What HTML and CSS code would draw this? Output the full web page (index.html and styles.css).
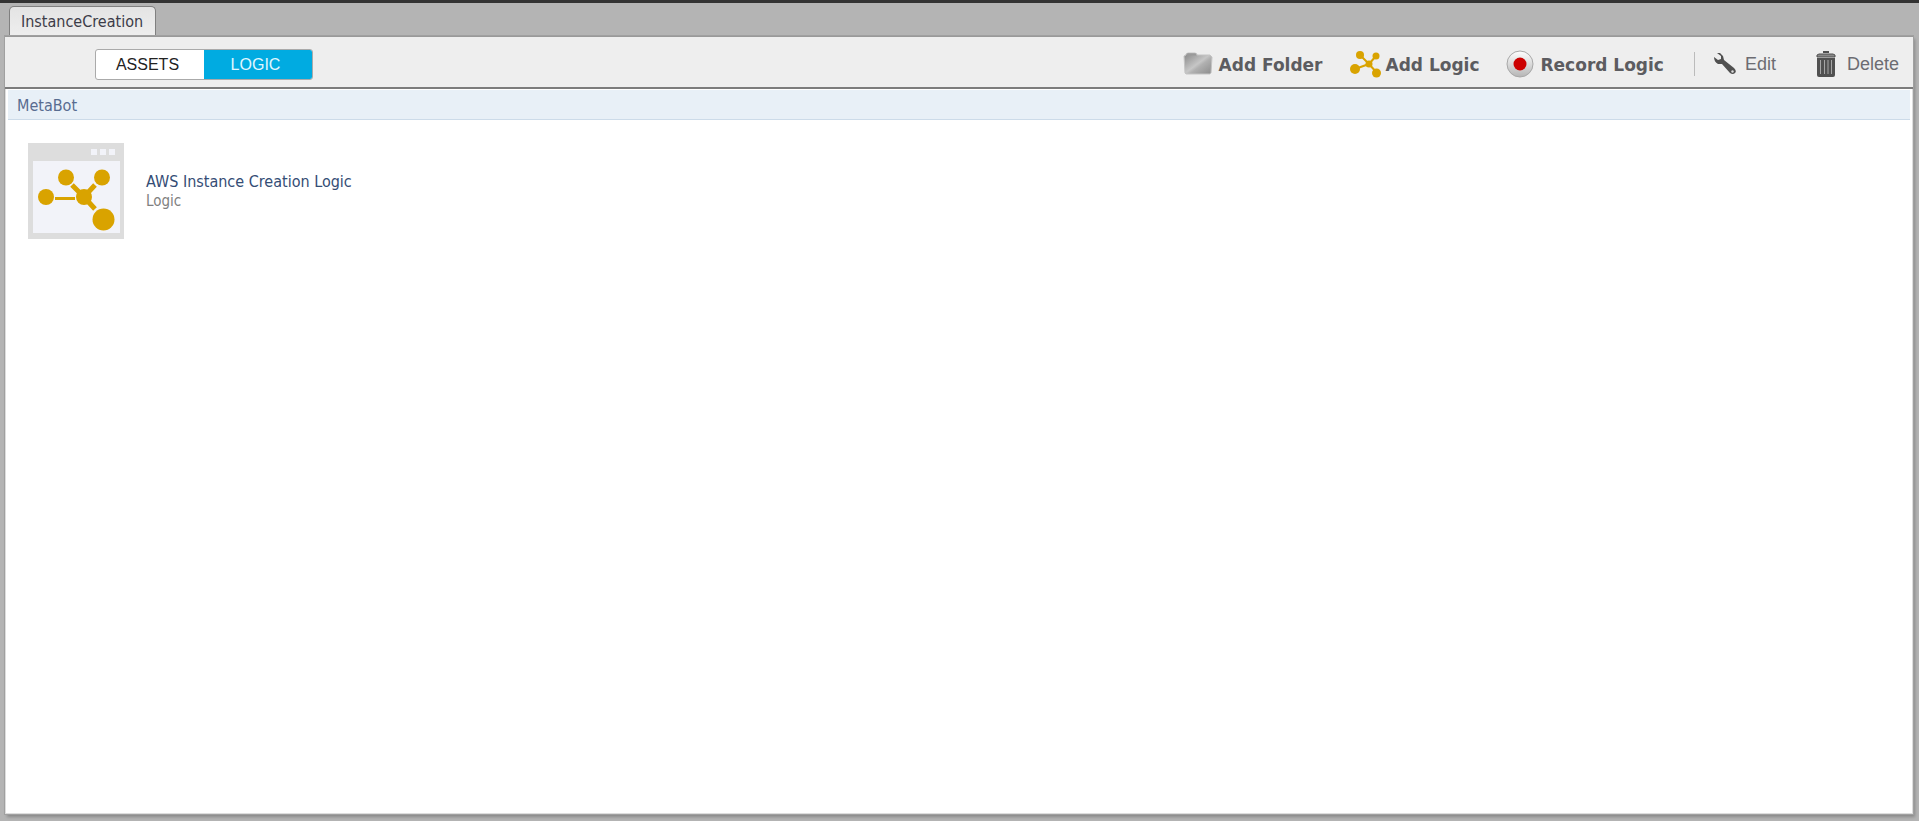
FILE: index.html
```html
<!DOCTYPE html>
<html lang="en">
<head>
<meta charset="utf-8">
<title>InstanceCreation</title>
<link rel="stylesheet" href="styles.css">
</head>
<body>
<div class="window">
  <nav class="tabs"><button class="tab" type="button">InstanceCreation</button></nav>
  <main class="panel">
    <header class="toolbar">
      <div class="switch">
        <button class="switch-item" type="button">ASSETS</button>
        <button class="switch-item active" type="button">LOGIC</button>
      </div>
      <div class="actions">
        <button class="action strong folder" type="button">
          <svg width="30" height="24" viewBox="0 0 30 24"><defs><linearGradient id="fg" x1="0" y1="0" x2="1" y2="1"><stop offset="0" stop-color="#858585"/><stop offset=".5" stop-color="#c6c6c6"/><stop offset=".6" stop-color="#b0b0b0"/><stop offset="1" stop-color="#8a8a8a"/></linearGradient></defs><path d="M3 3V2l2-1h7l2 1v1h13l2 2-1 16-1 1H3l-1-1L1 4z" fill="url(#fg)" stroke="#c4c4c4"/><path d="M4 2.500h9" stroke="#9a9a9a" stroke-width="2"/></svg>
          <span>Add Folder</span></button>
        <button class="action strong logic" type="button">
          <svg width="32" height="28" viewBox="0 0 32 28"><path d="M10 5l9 9 7-8M5 19l14-5 8 9" fill="none" stroke="#d9a300" stroke-width="2"/><g fill="#d9a300"><circle cx="10" cy="5" r="4"/><circle cx="26" cy="6" r="3.500"/><circle cx="19" cy="14" r="3.500"/><circle cx="5" cy="19" r="5"/><circle cx="26.500" cy="23" r="4.500"/></g></svg>
          <span>Add Logic</span></button>
        <button class="action strong record" type="button">
          <svg width="28" height="28" viewBox="0 0 28 28"><defs><linearGradient id="rg" x1="0" y1="0" x2="0" y2="1"><stop offset="0" stop-color="#fff"/><stop offset="1" stop-color="#b5b5b5"/></linearGradient></defs><circle cx="14" cy="14" r="13" fill="url(#rg)" stroke="#a8a8a8"/><circle cx="14" cy="14" r="6.500" fill="#cc0000"/></svg>
          <span>Record Logic</span></button>
        <span class="divider"></span>
        <button class="action edit" type="button">
          <svg width="22" height="22" viewBox="0 0 22 22"><path d="M3 0H6L9 3 10 7 20 15Q23 18 21 20T16 20L8 11H4Q0 9 0 4L4 7 7 6V3z" fill="#505050"/><circle cx="18.500" cy="18.500" r="1.200" fill="#ddd"/></svg>
          <span>Edit</span></button>
        <button class="action delete" type="button">
          <svg width="20" height="27" viewBox="0 0 20 27"><path d="M7 1h6" stroke="#505050" stroke-width="2"/><path d="M1 6V4l2-1h14l2 1v2z" fill="#888" stroke="#505050"/><path d="M1 7h18v17q0 2-2 2H3q-2 0-2-2z" fill="#505050"/><path d="M4.500 9v14M8.500 9v14M12 9v14M15.500 9v14" stroke="#a5a5a5"/></svg>
          <span>Delete</span></button>
      </div>
    </header>
    <section class="content">
      <h1 class="crumb">MetaBot</h1>
      <article class="item">
        <svg width="96" height="96" viewBox="0 0 96 96"><path d="M0 0h96v96H0z" fill="#ddd"/><path d="M5 18h87v72H5zM63 6h6v6h-6zM72 6h6v6h-6zM81 6h6v6h-6z" fill="#f2f3f9"/><path d="M44 42l12 12 11-12M56 54l11 12" fill="none" stroke="#d9a300" stroke-width="5"/><path d="M27 55.500h20" stroke="#d9a300" stroke-width="3"/><g fill="#d9a300"><circle cx="38" cy="34.500" r="8"/><circle cx="74" cy="34.500" r="8"/><circle cx="18" cy="54" r="8"/><circle cx="56" cy="54" r="8"/><circle cx="75.500" cy="76.500" r="11"/></g></svg>
        <div class="item-text"><h2 class="item-name">AWS Instance Creation Logic</h2><p class="item-kind">Logic</p></div>
      </article>
    </section>
  </main>
</div>
</body>
</html>
```
FILE: styles.css
```css
* { box-sizing: border-box; }
body { margin: 0; font-family: "DejaVu Sans Condensed", "DejaVu Sans", sans-serif; }
button { font: inherit; margin: 0; padding: 0; border: 0; background: none; }
h1, h2, p { margin: 0; font-weight: 400; }
svg { display: block; flex: none; }
.window { display: flex; flex-direction: column; min-height: 100vh; padding: 0 6px 7px 5px; background: #b4b4b4; border-top: 3px solid #333; }
.tabs { display: flex; height: 33px; padding: 3px 0 0 4px; }
.tab { padding: 0 12px 0 11px; font-size: 16px; color: #3c3c48; background: linear-gradient(#e4e4e4, #eee); border: solid #808080; border-width: 1px 1px 0; border-radius: 5px 5px 0 0; }
.panel { flex: 1; display: flex; flex-direction: column; background: #eee; border-top: 1px solid #999; box-shadow: 0 0 0 1px #a0a0a0, 2px 3px 3px #888; }
.toolbar { display: flex; align-items: center; justify-content: space-between; height: 52px; padding: 4px 14px 0 90px; border-bottom: 2px solid #7c7c7c; }
.switch { display: flex; height: 31px; border: 1px solid #aaa; border-radius: 3px; background: #fff; overflow: hidden; }
.switch-item { width: 108px; padding: 2px 5px 0 0; font: 16px "Liberation Sans", sans-serif; color: #222; }
.active { background: #00abe1; color: #e0f7ff; }
.actions { display: flex; align-items: center; }
.action { display: flex; align-items: center; gap: 7px; font: 18px "Liberation Sans", sans-serif; color: #6c6c72; white-space: nowrap; }
.action span { padding-top: 1px; }
.strong { font: 700 17px "DejaVu Sans", sans-serif; color: #5c5c60; }
.folder { gap: 6px; margin-right: 27px; }
.logic { gap: 4px; margin-right: 26px; }
.record { margin-right: 30px; }
.divider { width: 1px; height: 24px; margin-right: 19px; background: #bbb; }
.edit { gap: 9px; margin-right: 40px; }
.delete { gap: 11px; }
.content { flex: 1; padding: 1px 2px; background: #fff; border: 1px solid #ddd; border-top: 0; }
.crumb { height: 30px; padding-left: 9px; font-size: 16px; line-height: 32px; color: #586c90; background: #e8f0f7; border-bottom: 1px solid #ccdbe9; }
.item { display: flex; align-items: center; gap: 22px; padding: 23px 20px; }
.item-name { font-size: 16px; line-height: 20px; color: #344d75; }
.item-kind { font-size: 15px; line-height: 18px; color: #808080; }
```
